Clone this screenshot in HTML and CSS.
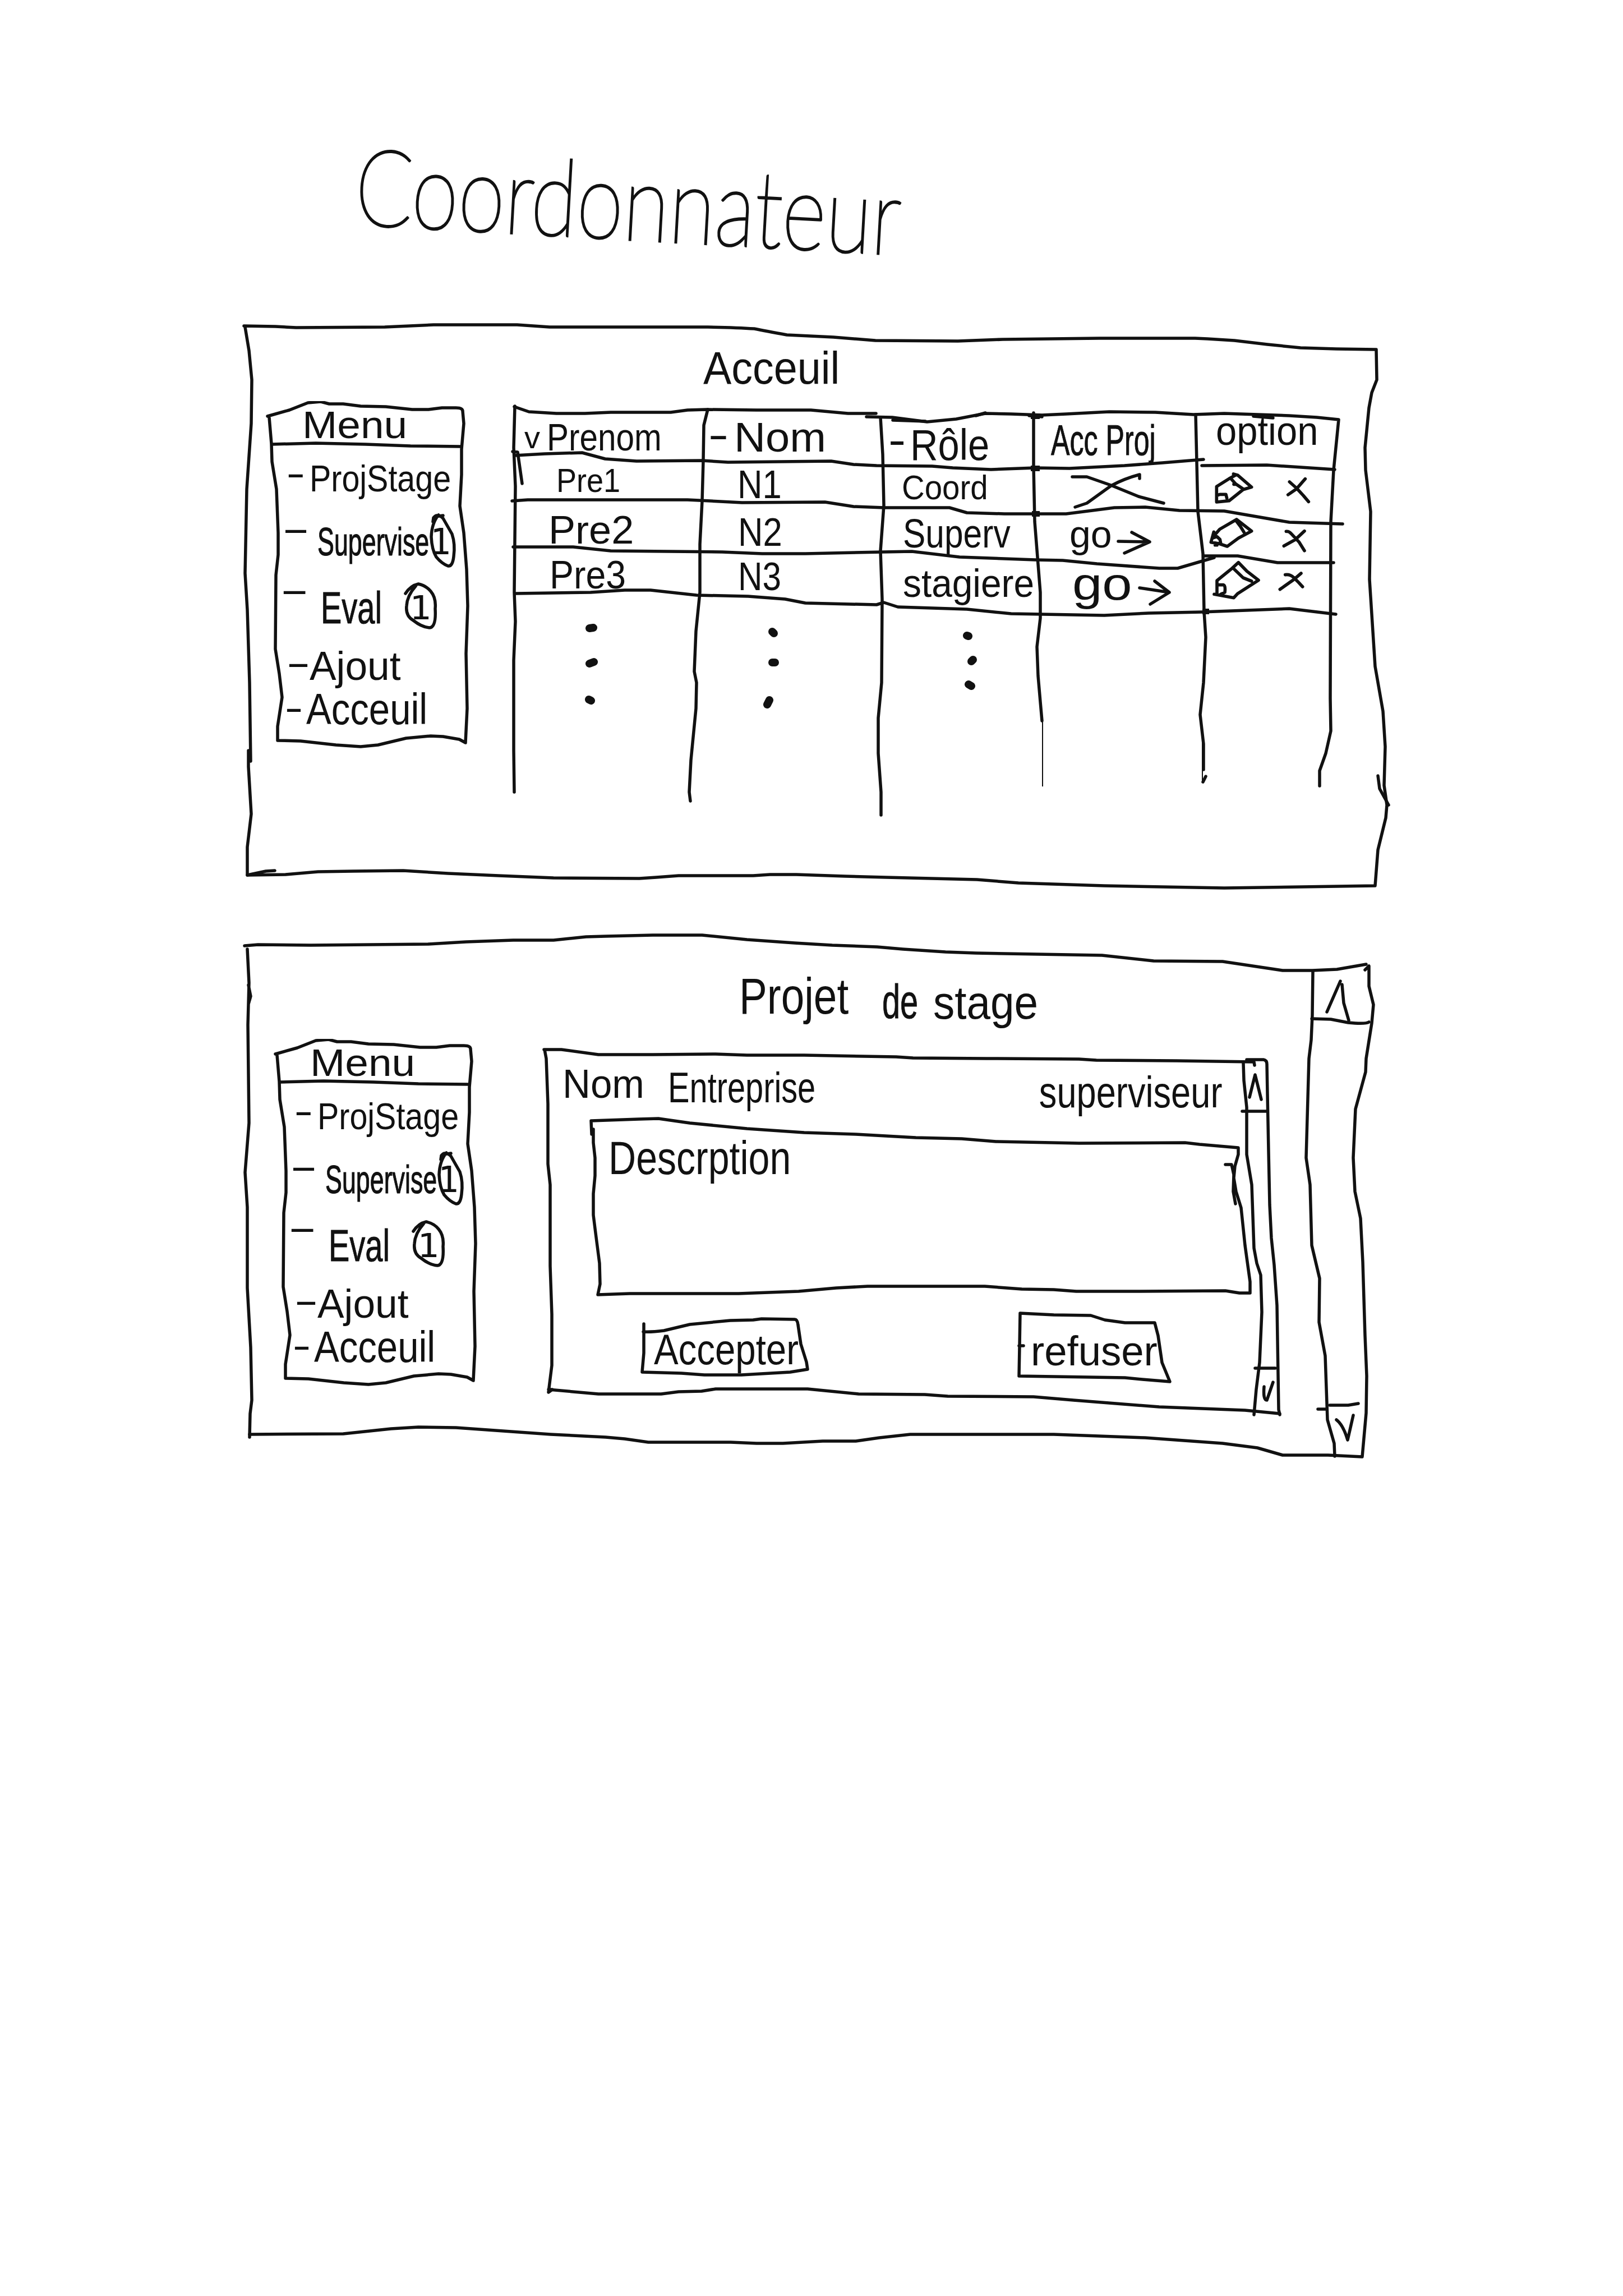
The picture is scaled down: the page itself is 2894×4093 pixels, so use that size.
FILE: index.html
```html
<!DOCTYPE html>
<html lang="fr">
<head>
<meta charset="utf-8">
<title>Coordonnateur</title>
<link rel="stylesheet" href="styles.css">
</head>
<body>
<svg class="defs" aria-hidden="true">
  <symbol id="menu-frame" viewBox="470 715 370 620">
    <path d="M477 742L516 731L549 718L572 716L587 720L612 720L643 724L688 725L735 730L764 730L788 727L813 727Q825 727 825 733L827 755L823 801L823 846L820 902L827 950L832 1015L834 1080L831 1165L833 1263L830 1324L819 1318L790 1313L768 1312L724 1316L674 1328L643 1331L599 1328L536 1321L495 1320L495 1295L503 1243L498 1201L491 1157L492 1025L496 989L496 950L493 872L485 823L484 791L480 744"/>
    <path d="M485 792L563 790L652 792L732 795L822 796"/>
    <path d="M782 918Q770 932 769 957Q770 980 778 993Q788 1005 799 1009Q807 1010 809 992Q812 970 806 952L790 924Q780 914 773 923L772 930M776 921L790 919"/>
    <path d="M723 1058Q732 1044 746 1041Q760 1044 768 1054Q778 1066 776 1085Q778 1118 766 1119Q752 1118 737 1106Q723 1098 725 1080Q726 1062 741 1045"/>
  </symbol>
</svg>

<header class="page-head"><h1>Coordonnateur</h1></header>

<main>
<section class="screen home">
  <svg class="ink" viewBox="430 570 2050 1020">
    <path d="M435 581L491 582L528 584L686 583L773 579L922 579L980 583L1262 583Q1315 584 1345 586Q1365 590 1403 597L1486 601L1561 607L1708 608L1788 605L1960 603L2131 603L2153 604L2201 607L2260 614L2319 620L2383 622L2454 623L2455 677L2446 700L2441 727L2434 798L2435 838L2444 912L2442 1033L2452 1188L2466 1268L2470 1331L2468 1400L2473 1435L2471 1458L2457 1515L2452 1579L2183 1583L1969 1579L1816 1574L1742 1568L1580 1564L1507 1562L1420 1559L1373 1559L1343 1561L1210 1561L1170 1564L1140 1566L987 1565L889 1561L799 1557L719 1552L630 1553L567 1554L509 1559L441 1560L441 1510L448 1451L443 1367L443 1338L447 1357L445 1217L441 1087L437 1022L440 872L448 755L449 677L444 625L437 583"/>
    <path d="M2457 1383L2460 1406L2476 1435M441 1560L474 1553L490 1552"/>
  </svg>
  <h2 class="home-title"><span>Acceuil</span></h2>
  <div class="screen-body">
    <nav class="menu">
      <svg class="ink"><use href="#menu-frame"/></svg>
      <div class="menu-title"><span>Menu</span></div>
      <div class="item i-proj"><i>-</i><span>ProjStage</span></div>
      <div class="item i-sup"><i>-</i><span>Supervise</span><b>1</b></div>
      <div class="item i-eval"><i>-</i><span>Eval</span><b>1</b></div>
      <div class="item i-ajout"><i>-</i><span>Ajout</span></div>
      <div class="item i-acc"><i>-</i><span>Acceuil</span></div>
    </nav>

    <div class="table">
      <svg class="ink" viewBox="905 715 1495 745">
        <path d="M917 725L943 734L992 737L1043 737L1089 735L1196 735L1226 731L1260 730L1349 731L1446 731L1512 737L1562 737M1545 743L1591 744L1653 752L1705 747L1757 737L1803 738L1858 740L1901 738L1978 734L2060 735L2128 739L2183 737L2299 741L2348 744L2387 748L2378 838L2373 930L2372 1245L2373 1303L2364 1343L2353 1374L2353 1401"/>
        <path d="M1592 749L1650 751M1740 741L1757 736M1835 741L1858 743M2235 742L2270 745"/>
        <path d="M917 812L971 809L1038 807L1079 818L1135 822L1252 821L1298 824L1482 822L1522 828L1563 830L1662 831L1699 834L1767 837L1846 834L1907 835L2005 830L2073 825L2146 819M2143 830L2259 829L2305 832L2380 837"/>
        <path d="M913 893L941 891L1226 891L1323 896L1471 895L1522 903L1576 905L1693 905L1724 914L1791 916L1901 916L1987 905L2042 904L2103 910L2183 911L2299 931L2394 934"/>
        <path d="M915 975L1022 975L1089 982L1288 984L1359 987L1436 987L1573 984L1626 983L1711 993L1846 998L1895 999L1956 1005L2067 1013L2100 1013L2165 994M2146 991L2207 991L2278 1003L2378 1003"/>
        <path d="M920 1058L1053 1056L1114 1052L1160 1052L1242 1061L1334 1063L1400 1068L1436 1075L1563 1078L1576 1074L1601 1082L1724 1086L1803 1094L1969 1097L2048 1093L2143 1091L2299 1085L2382 1095"/>
        <path d="M918 724L916 798L919 867L917 1056L919 1108L916 1177L916 1338L917 1412M914 805L923 806L931 862"/>
        <path d="M1262 730L1255 758L1254 821L1252 893L1248 970L1248 1056L1241 1125L1238 1197L1242 1217L1241 1263L1232 1355L1229 1412L1231 1428"/>
        <path d="M1570 744L1574 810L1576 901L1570 982L1573 1068L1572 1217L1566 1280L1566 1343L1571 1412L1571 1453"/>
        <path d="M1843 736L1843 832L1845 930L1855 1056L1855 1102L1849 1153L1851 1205L1855 1251L1858 1285M2132 739L2136 912L2145 987L2147 1090L2150 1136L2146 1217L2140 1274L2146 1326L2146 1372M2150 1384L2145 1394"/>
        <path class="fine" d="M1859 1280V1402M2144 1320V1395"/>
        <path class="heavy" d="M1838 742H1854M1838 835H1854M1840 916H1854M2144 1090H2156"/>
        <g class="dots"><path d="M1051 1120L1058 1119M1051 1183L1059 1180M1050 1247L1054 1249M1377 1126L1380 1129M1377 1181L1382 1181M1368 1256L1372 1248M1724 1133L1727 1134M1732 1179L1735 1176M1727 1220L1732 1223"/></g>
      </svg>
      <div class="col c-prenom"><div class="cell h"><i>v</i><span>Prenom</span></div><div class="cell r1"><span>Pre1</span></div><div class="cell r2"><span>Pre2</span></div><div class="cell r3"><span>Pre3</span></div></div>
      <div class="col c-nom"><div class="cell h"><i>-</i><span>Nom</span></div><div class="cell r1"><span>N1</span></div><div class="cell r2"><span>N2</span></div><div class="cell r3"><span>N3</span></div></div>
      <div class="col c-role"><div class="cell h"><i>-</i><span>Rôle</span></div><div class="cell r1"><span>Coord</span></div><div class="cell r2"><span>Superv</span></div><div class="cell r3"><span>stagiere</span></div></div>
      <div class="col c-acc">
        <div class="cell h"><span>Acc Proj</span></div>
        <div class="cell r1"><svg class="none" viewBox="1906 840 180 74"><path d="M1912 850L1938 850L1981 865L2030 885L2075 897M2032 853V846Q2005 853 1981 866L1938 897L1917 904"/></svg></div>
        <div class="cell r2"><span>go</span><svg class="arrow" viewBox="1988 940 70 54"><path d="M1994 965L2050 966M2018 949L2050 966L2005 986"/></svg></div>
        <div class="cell r3"><span>go</span><svg class="arrow" viewBox="2026 1030 70 54"><path d="M2032 1048L2085 1056M2059 1036L2085 1056L2051 1077"/></svg></div>
      </div>
      <div class="col c-opt">
        <div class="cell h"><span>option</span></div>
        <svg class="acts a1" viewBox="60 36 735 240"><path d="M238 75L262 82L335 145L290 158L215 218L148 225V142L215 100L248 82M225 100L250 128L290 155M240 130H252M150 190L165 184L198 184L203 205M538 117L575 150L612 190L640 223M622 101L575 155L530 186"/></svg>
        <svg class="acts a2" viewBox="60 276 735 240"><path d="M133 385L118 440L160 447L205 462L265 418L335 380L255 318L165 370L128 412M252 325L275 355L295 387M125 418L150 410L166 425L170 445M140 455H150M520 382Q535 380 548 395L590 440L618 485M618 380L570 425L508 460"/></svg>
        <svg class="acts a3" viewBox="60 516 735 300"><path d="M135 718L240 737L260 715L372 643L310 595L265 548L230 580L150 645V715M240 582L290 630L335 648M155 668H185Q197 672 192 708L170 718M515 614Q540 610 560 628L582 650L608 678M600 606L560 640L487 692"/></svg>
      </div>
    </div>
  </div>
</section>

<section class="screen project">
  <svg class="ink" viewBox="430 1660 2050 950">
    <path d="M436 1686L460 1684L554 1685L764 1683L831 1679L915 1676L987 1676L1045 1670L1080 1669L1164 1667L1252 1667L1332 1675L1417 1681L1484 1685L1564 1688L1610 1692L1686 1697L1740 1699L1965 1703L2057 1713L2180 1714L2287 1730L2340 1730L2384 1728L2436 1719M2434 1729L2441 1722V1758L2449 1791L2446 1824L2436 1887L2435 1911L2417 1977L2413 2064L2416 2124L2426 2172L2430 2250L2434 2381L2437 2453L2436 2519L2429 2597L2368 2594L2287 2594L2242 2581L2180 2573L2042 2563L1879 2557L1623 2557L1568 2563L1526 2569L1467 2569L1396 2573L1349 2573L1303 2571L1156 2571L1114 2565L1080 2562L982 2557L813 2545L746 2544L697 2547L612 2556L445 2557"/>
    <path d="M441 1692L444 1752L442 1827L444 2002L437 2090L441 2152L441 2296L447 2402L449 2496L446 2520L445 2562M443 1756L447 1776L443 1790"/>
    <path d="M2341 1731L2340 1810L2338 1854L2334 1887L2329 2064L2336 2112L2339 2220L2353 2279L2352 2357L2363 2417L2367 2531L2379 2573L2380 2596"/>
    <path d="M2339 1816L2373 1817L2404 1823Q2435 1826 2441 1822M2350 2512H2366M2371 2505H2404L2422 2502"/>
    <path d="M2366 1804L2390 1749M2393 1755L2396 1788L2405 1819M2383 2531Q2395 2540 2403 2567L2413 2523"/>
  </svg>
  <h2 class="project-title"><span>Projet</span><span>de</span><span>stage</span></h2>
  <div class="screen-body">
    <nav class="menu second">
      <svg class="ink"><use href="#menu-frame"/></svg>
      <div class="menu-title"><span>Menu</span></div>
      <div class="item i-proj"><i>-</i><span>ProjStage</span></div>
      <div class="item i-sup"><i>-</i><span>Supervise</span><b>1</b></div>
      <div class="item i-eval"><i>-</i><span>Eval</span><b>1</b></div>
      <div class="item i-ajout"><i>-</i><span>Ajout</span></div>
      <div class="item i-acc"><i>-</i><span>Acceuil</span></div>
    </nav>

    <article class="card">
      <svg class="ink" viewBox="965 1865 1325 665">
        <path d="M970 1871H1001L1067 1880L1164 1880L1276 1879L1332 1881L1434 1881L1598 1884L1628 1886L1760 1887L1924 1888L1955 1890L2098 1891L2236 1893L2237 1899M971 1871L974 1887L977 1968V2075L981 2112V2257L984 2343V2434L978 2482L985 2477H978L1067 2485H1179L1210 2481L1251 2480L1276 2476H1440L1531 2485L1649 2486L1690 2489L1843 2490L1914 2496L2067 2508L2220 2514L2282 2520"/>
        <path d="M2223 1889H2253Q2259 1890 2259 1897L2260 1950L2262 2052L2264 2148L2267 2207L2272 2255L2277 2327L2280 2513L2282 2522M2217 1895L2218 1926L2223 1974V2058L2232 2112L2236 2225L2241 2252L2248 2273L2250 2339L2246 2429L2240 2477L2236 2522"/>
        <path d="M2215 1981H2260M2238 2439H2274M2228 1956L2238 1916L2249 1960M2254 2472Q2252 2496 2259 2496L2270 2464"/>
        <path d="M1055 2022L1054 1998L1139 1995L1174 1994L1230 2002L1332 2012L1434 2019L1526 2022L1633 2028L1715 2030L1776 2035L1924 2038L2113 2037L2139 2040L2208 2046V2058L2202 2079L2200 2100L2204 2124L2213 2153L2220 2220L2229 2285V2305H2210L2185 2301L2021 2302H1919L1879 2299L1822 2298L1756 2293H1547L1491 2296L1424 2302L1317 2306H1123L1066 2308L1070 2289L1069 2252L1062 2198L1058 2166V2128L1061 2096V2064L1058 2037V2013M2185 2076H2196L2200 2094L2199 2124L2203 2146"/>
      </svg>
      <div class="card-head"><span class="nom">Nom</span><span class="ent">Entreprise</span><span class="sup">superviseur</span></div>
      <div class="desc"><span>Descrption</span></div>
      <div class="actions">
        <button class="ok"><svg class="ink" viewBox="1144 2345 300 110"><path d="M1148 2360V2412L1145 2446L1215 2448L1256 2451H1322L1409 2446L1440 2441L1438 2428L1428 2396L1423 2362Q1422 2352 1417 2352L1358 2351L1343 2353L1302 2354L1230 2361L1184 2372Q1160 2375 1147 2374"/></svg><span>Accepter</span></button>
        <button class="no"><svg class="ink" viewBox="1814 2335 276 132"><path d="M1819 2341L1818 2400L1817 2453L2006 2456L2037 2459L2086 2463L2072 2429L2065 2381L2059 2358L2006 2358L1970 2353L1945 2345L1879 2344L1819 2341M1817 2399H1825"/></svg><span>refuser</span></button>
      </div>
    </article>
  </div>
</section>
</main>
</body>
</html>
```

FILE: styles.css
```css
* { box-sizing: border-box; }

body {
  margin: 0;
  width: 2894px;
  height: 4093px;
  overflow: hidden;
  background: #fff;
  color: #111;
  font-family: "Liberation Sans", Arial, sans-serif;
}

.defs { display: block; width: 0; height: 0; }

h1, h2 { margin: 0; font-weight: 400; }

span, i, b {
  display: block;
  flex: none;
  white-space: nowrap;
  font-style: normal;
  font-weight: 400;
  transform-origin: 0 50%;
}

svg { fill: none; stroke: #111; stroke-width: 5.5; stroke-linecap: round; stroke-linejoin: round; }

/* hand-drawn frames sit behind the content of their box */
.ink { position: absolute; inset: 0; width: 100%; height: 100%; overflow: visible; z-index: -1; }
.fine { stroke-width: 2; stroke-linecap: butt; }
.heavy { stroke-width: 10; stroke-linecap: butt; }
.dots { stroke-width: 14; }

/* page title */
.page-head { height: 570px; padding: 226px 0 0 631px; }
h1 {
  width: max-content;
  font-family: Lato, "Liberation Sans", sans-serif;
  font-weight: 100;
  font-size: 190px;
  line-height: 200px;
  -webkit-text-stroke: 4px #111;
  transform-origin: 0 80%;
  transform: rotate(3.2deg) scaleX(.793);
}

.screen { position: relative; z-index: 0; width: 2050px; margin-left: 430px; }
.home { height: 1020px; }
.project { height: 950px; margin-top: 70px; }
.screen-body { display: flex; align-items: flex-start; }

.home-title { height: 145px; padding: 56px 0 0 824px; font-size: 82px; line-height: 59px; }
.home-title span { transform: scaleX(.92); }
.project-title {
  display: grid;
  grid-template-columns: 255px 91px auto;
  height: 192px;
  padding: 70px 0 0 888px;
  line-height: 92px;
}
.project-title span:nth-child(1) { font-size: 90px; transform: scaleX(.83); }
.project-title span:nth-child(2) { font-size: 86px; transform: translateY(9px) scaleX(.67); -webkit-text-stroke: 1px #111; }
.project-title span:nth-child(3) { font-size: 84px; transform: translateY(11px) scaleX(.91); }

/* menu */
.menu { position: relative; flex: none; width: 370px; height: 620px; margin-left: 40px; }
.menu.second { margin-left: 54px; }
.menu-title { height: 87px; padding-left: 69px; font-size: 68px; line-height: 85px; }
.menu-title span { transform: scaleX(1.1); }
.item { display: grid; grid-template-columns: var(--dash) var(--label) auto; }
.item i { padding-left: 38px; font-size: 66px; }
.item b { font-family: "DejaVu Sans Mono", monospace; }
.i-proj { --dash: 82px; --label: 250px; height: 96px; line-height: 102px; font-size: 66px; }
.i-proj span { transform: scaleX(.87); }
.i-proj i { padding-left: 26px; transform: translateY(-10px) scaleX(1.55); }
.i-sup { --dash: 96px; --label: 201px; height: 137px; line-height: 137px; font-size: 70px; }
.i-sup span { transform: scaleX(.64); -webkit-text-stroke: 1.2px #111; }
.i-sup i { padding-left: 14px; transform: translateY(-24px) scaleX(2.3); }
.i-sup b { font-size: 64px; transform: scaleX(.95); }
.i-eval { --dash: 102px; --label: 158px; height: 100px; line-height: 98px; font-size: 80px; }
.i-eval span { transform: scaleX(.7); -webkit-text-stroke: 1px #111; }
.i-eval i { padding-left: 12px; transform: translateY(-33px) scaleX(2.4); }
.i-eval b { font-size: 58px; transform: scaleX(1.1); }
.i-ajout { --dash: 82px; --label: auto; height: 104px; line-height: 104px; font-size: 72px; }
.i-ajout span { transform: scaleX(.99); }
.i-ajout i { padding-left: 20px; transform: translateY(-6px) scaleX(2); }
.i-acc { --dash: 76px; --label: auto; height: 48px; line-height: 50px; font-size: 78px; }
.i-acc span { transform: scaleX(.86); }
.i-acc i { padding-left: 25px; transform: translateY(-3px) scaleX(1.5); }

/* table */
.table {
  position: relative;
  display: grid;
  grid-template-columns: 337px 317px 274px 294px 260px;
  flex: none;
  width: 1495px;
  height: 745px;
  margin-left: 65px;
  padding: 15px 0 0 13px;
}
.cell { display: flex; align-items: flex-start; height: var(--h); line-height: var(--h); }
.c-prenom { padding-top: 5px; }
.c-prenom .h { --h: 89px; font-size: 68px; }
.c-prenom .h i { width: 57px; padding-left: 17px; font-size: 56px; }
.c-prenom .h span { transform: scaleX(.86); }
.c-prenom .r1 { --h: 66px; font-size: 60px; padding-left: 74px; }
.c-prenom .r1 span { transform: scaleX(.9); }
.c-prenom .r2 { --h: 111px; font-size: 70px; padding-left: 60px; }
.c-prenom .r2 span { transform: scaleX(1.03); }
.c-prenom .r3 { --h: 48px; font-size: 70px; padding-left: 62px; }
.c-prenom .r3 span { transform: scaleX(.92); }

.c-nom { padding-top: 4px; }
.c-nom .h { --h: 92px; font-size: 74px; }
.c-nom .h i { width: 54px; padding-left: 5px; transform: translateY(-5px) scaleX(1.5); }
.c-nom .h span { transform: scaleX(1.05); }
.c-nom .r1 { --h: 76px; font-size: 70px; padding-left: 60px; }
.c-nom .r1 span { transform: scaleX(.88); }
.c-nom .r2 { --h: 94px; font-size: 70px; padding-left: 61px; }
.c-nom .r2 span { transform: scaleX(.88); }
.c-nom .r3 { --h: 64px; font-size: 70px; padding-left: 61px; }
.c-nom .r3 span { transform: scaleX(.86); }

.c-role, .c-acc, .c-opt { padding-top: 10px; }
.c-role .h { --h: 109px; height: 109px; line-height: 106px; font-size: 78px; }
.c-role .h i { width: 51px; padding-left: 10px; transform: translateY(-9px) scaleX(1.2); }
.c-role .h span { transform: scaleX(.88); }
.c-role .r1 { --h: 39px; font-size: 62px; padding-left: 36px; }
.c-role .r1 span { transform: scaleX(.91); }
.c-role .r2 { --h: 126px; font-size: 72px; padding-left: 38px; }
.c-role .r2 span { transform: scaleX(.84); }
.c-role .r3 { --h: 52px; font-size: 70px; padding-left: 38px; }
.c-role .r3 span { transform: scaleX(.94); }

.c-acc .h { --h: 91px; line-height: 89px; font-size: 76px; padding-left: 28px; }
.c-acc .h span { transform: scaleX(.66); -webkit-text-stroke: 1px #111; }
.c-acc .r1 { --h: 75px; padding: 9px 0 0 60px; }
.none { width: 180px; height: 74px; overflow: visible; }
.c-acc .r2 { --h: 93px; font-size: 68px; padding-left: 61px; }
.c-acc .r2 span { width: 81px; transform: scaleX(1); }
.c-acc .r3 { --h: 84px; font-size: 82px; padding-left: 66px; }
.c-acc .r3 span { width: 114px; transform: scaleX(1.17); }
.arrow { flex: none; width: 70px; height: 54px; overflow: visible; }
.r2 .arrow { margin-top: 34px; }
.r3 .arrow { margin-top: 31px; }

.c-opt .h { --h: 56px; height: 92px; font-size: 72px; padding-left: 28px; }
.c-opt .h span { transform: scaleX(.93); }
.acts { display: block; width: 245px; height: 80px; stroke-width: 17; overflow: visible; }
.a3 { height: 100px; }

/* project card */
.card { position: relative; flex: none; width: 1325px; height: 665px; margin: 13px 0 0 111px; }
.card-head {
  display: grid;
  grid-template-columns: 188px 657px auto;
  height: 125px;
  padding-left: 38px;
  line-height: 130px;
}
.nom { font-size: 72px; transform: translateY(2px) scaleX(.96); }
.ent { font-size: 76px; transform: translateY(9px) scaleX(.76); }
.sup { padding-left: 6px; font-size: 78px; transform: translateY(17px) scaleX(.81); }
.desc { height: 320px; padding-left: 120px; font-size: 84px; line-height: 148px; }
.desc span { transform: scaleX(.81); }
.actions { display: flex; align-items: flex-start; padding-left: 179px; }
button {
  position: relative;
  display: flex;
  align-items: flex-start;
  padding: 0;
  border: 0;
  background: none;
  color: inherit;
  font: inherit;
}
.ok { width: 300px; height: 110px; margin-top: 35px; padding-left: 22px; font-size: 76px; line-height: 121px; }
.ok span { transform: scaleX(.86); }
.no { width: 276px; height: 132px; margin: 25px 0 0 370px; padding-left: 24px; font-size: 74px; line-height: 147px; }
.no span { transform: scaleX(.98); }
```
